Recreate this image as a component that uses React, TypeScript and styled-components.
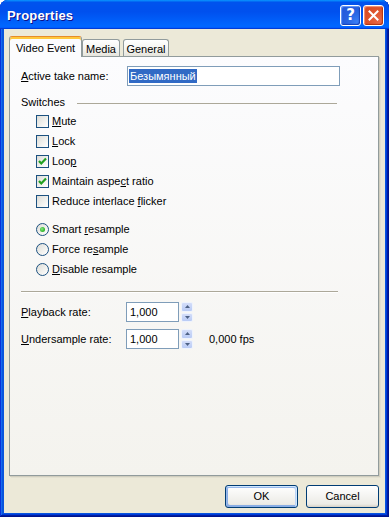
import React from "react";
import styled, { createGlobalStyle, css } from "styled-components";

const Global = createGlobalStyle`
  html, body { margin: 0; padding: 0; background: #ffffff; }
  body { font-family: "Liberation Sans", Arial, sans-serif; font-size: 11px; color: #000; }
  * { box-sizing: border-box; }
`;

const Window = styled.div`
  width: 389px;
  height: 517px;
  display: flex;
  flex-direction: column;
  background: #0855dd;
  border-radius: 8px 8px 0 0;
  overflow: hidden;
  box-shadow: inset -1px -1px #00138c, inset 1px 1px #0831d9, inset -2px -2px #001ea0,
    inset 2px 2px #166aee, inset -3px -3px #003bda, inset 3px 3px #0855dd;
`;

const TitleBar = styled.div`
  flex: none;
  height: 29px;
  display: flex;
  align-items: center;
  justify-content: space-between;
  padding: 1px 5px 0 7px;
  background: linear-gradient(180deg, #0997ff, #0053ee 8%, #0050ee 40%, #06f 88%, #06f 93%, #005bff 95%, #003dd7 96%, #003dd7);
`;

const Title = styled.div`
  font-family: "Liberation Sans", Arial, sans-serif;
  font-weight: bold;
  font-size: 13px;
  color: #fff;
  text-shadow: 1px 1px #0f1089;
  letter-spacing: 0.2px;
`;

const TitleButtons = styled.div`
  display: flex;
  gap: 2px;
`;

const CaptionButton = styled.div<{ $kind: "help" | "close" }>`
  width: 21px;
  height: 21px;
  border: 1px solid #fff;
  border-radius: 3px;
  display: flex;
  align-items: center;
  justify-content: center;
  color: #fff;
  font-family: "DejaVu Sans", sans-serif;
  font-weight: bold;
  font-size: 15px;
  ${(p) =>
    p.$kind === "help"
      ? css`
          background: radial-gradient(circle at 85% 85%, #3b7ff6 0%, #2863e0 45%, #1f55d8 100%);
          box-shadow: inset -1px -1px 1px #1741b6, inset 1px 1px 1px #6b9cf8;
        `
      : css`
          background: radial-gradient(circle at 85% 85%, #e9694a 0%, #e0562f 45%, #d1461f 100%);
          box-shadow: inset -1px -1px 1px #b03310, inset 1px 1px 1px #f39a7e;
        `}
`;

const Client = styled.div`
  flex: 1;
  margin: 0 4px 4px;
  background: #ece9d8;
  padding: 7px 6px 0 5px;
  display: flex;
  flex-direction: column;
`;

const TabStrip = styled.div`
  display: flex;
  align-items: flex-end;
  height: 21px;
  margin-bottom: -1px;
  position: relative;
  z-index: 1;
`;

const Tab = styled.div<{ $active?: boolean; $w: number; $gap?: number }>`
  width: ${(p) => p.$w}px;
  margin-left: ${(p) => p.$gap ?? 0}px;
  height: 17px;
  margin-bottom: 1px;
  border: 1px solid #919b9c;
  border-bottom: none;
  border-radius: 3px 3px 0 0;
  background: linear-gradient(180deg, #ffffff, #f3f3ef 60%, #e6e4dc);
  text-align: center;
  line-height: 13px;
  padding-top: 3px;
  ${(p) =>
    p.$active &&
    css`
      height: 21px;
      margin-bottom: 0;
      border-top: 1px solid #e68b2c;
      box-shadow: inset 0 2px #ffc83c;
      background: #fcfcfe;
      padding-top: 5px;
    `}
`;

const TabPanel = styled.div`
  height: 420px;
  flex: none;
  border: 1px solid #919b9c;
  box-shadow: 1px 1px 0 #d0cebf, 2px 2px 0 #e3e0d0;
  background: linear-gradient(180deg, #fcfcfe, #f4f3ee);
  padding: 9px 37px 0 11px;
  display: flex;
  flex-direction: column;
`;

const FieldRow = styled.div`
  display: flex;
  align-items: center;
  height: 20px;
`;

const FieldLabel = styled.div<{ $w: number }>`
  width: ${(p) => p.$w}px;
  flex: none;
  line-height: 13px;
`;

const TextInput = styled.div`
  width: 213px;
  height: 20px;
  border: 1px solid #7f9db9;
  background: #fff;
  padding: 2px 0 0 1px;
  line-height: 14px;
`;

const Selected = styled.span`
  background: #316ac5;
  color: #fff;
  padding: 0 1px;
  display: inline-block;
  line-height: 14px;
`;

const GroupHeader = styled.div`
  display: flex;
  align-items: center;
  gap: 12px;
  margin-top: 10px;
  height: 13px;
  line-height: 13px;
`;

const Rule = styled.div`
  flex: 1;
  height: 1px;
  background: #aca899;
  margin-right: 4px;
  margin-top: 1px;
`;

const OptionList = styled.div<{ $top: number }>`
  display: flex;
  flex-direction: column;
  gap: 7px;
  margin-top: ${(p) => p.$top}px;
  padding-left: 15px;
`;

const OptionRow = styled.div`
  display: flex;
  align-items: center;
  height: 13px;
  line-height: 13px;
  gap: 3px;
`;

const CheckBox = styled.span`
  width: 13px;
  height: 13px;
  flex: none;
  border: 1px solid #1c5180;
  background: linear-gradient(135deg, #dcdcd7 0%, #f2f2ef 60%, #ffffff 100%);
  display: flex;
  align-items: center;
  justify-content: center;
`;

const Radio = styled.span`
  width: 13px;
  height: 13px;
  flex: none;
  border: 1px solid #1c5180;
  border-radius: 50%;
  background: linear-gradient(135deg, #dcdcd7 0%, #f2f2ef 60%, #ffffff 100%);
  display: flex;
  align-items: center;
  justify-content: center;
`;

const RadioDot = styled.span`
  width: 5px;
  height: 5px;
  border-radius: 50%;
  background: radial-gradient(circle at 40% 40%, #8ee38a 0%, #3ec23a 50%, #1d9a1a 100%);
`;

const Separator = styled.div`
  height: 2px;
  margin: 15px 3px 0 0;
  border-top: 1px solid #aca899;
  border-bottom: 1px solid #ffffff;
`;

const SpinRow = styled.div<{ $top: number }>`
  display: flex;
  align-items: center;
  height: 20px;
  margin-top: ${(p) => p.$top}px;
`;

const NumInput = styled.div`
  width: 53px;
  height: 20px;
  border: 1px solid #7f9db9;
  background: #fff;
  padding-left: 3px;
  line-height: 18px;
`;

const Spinner = styled.div`
  display: flex;
  flex-direction: column;
  gap: 1px;
  width: 12px;
  height: 20px;
  margin-left: 2px;
`;

const SpinButton = styled.div`
  flex: 1;
  border: 1px solid #eef3fd;
  border-radius: 2px;
  background: linear-gradient(180deg, #d3ddf9, #b9cbf5);
  display: flex;
  align-items: center;
  justify-content: center;
`;

const Unit = styled.div`
  margin-left: 16px;
  line-height: 13px;
`;

const ButtonRow = styled.div`
  display: flex;
  justify-content: flex-end;
  gap: 8px;
  margin-top: 9px;
`;

const Button = styled.div<{ $default?: boolean }>`
  width: 73px;
  height: 23px;
  border: 1px solid #003c74;
  border-radius: 3px;
  background: linear-gradient(180deg, #fff, #ecebe6 86%, #d6d0c5);
  display: flex;
  align-items: center;
  justify-content: center;
  line-height: 13px;
  ${(p) =>
    p.$default &&
    css`
      box-shadow: inset -1px 1px #cee7ff, inset 1px 2px #98b8ea, inset -2px 2px #bcd4f6,
        inset 1px -1px #89ade4, inset 2px -2px #89ade4;
    `}
`;

const Check = () => (
  <svg width="9" height="9" viewBox="0 0 9 9">
    <polyline points="1,4 3.3,6.5 8,1.5" fill="none" stroke="#21a121" strokeWidth="2.2" />
  </svg>
);

const Arrow = ({ up }: { up?: boolean }) => (
  <svg width="5" height="3" viewBox="0 0 5 3">
    <polygon points={up ? "0,3 5,3 2.5,0" : "0,0 5,0 2.5,3"} fill="#4d6185" />
  </svg>
);

const checks: { label: React.ReactNode; on: boolean }[] = [
  { label: <><u>M</u>ute</>, on: false },
  { label: <><u>L</u>ock</>, on: false },
  { label: <>Loo<u>p</u></>, on: true },
  { label: <>Maintain aspe<u>c</u>t ratio</>, on: true },
  { label: <>Reduce interlace <u>f</u>licker</>, on: false },
];

const radios: { label: React.ReactNode; on: boolean }[] = [
  { label: <>Smart <u>r</u>esample</>, on: true },
  { label: <>Force re<u>s</u>ample</>, on: false },
  { label: <><u>D</u>isable resample</>, on: false },
];

const Spin = ({ value }: { value: string }) => (
  <>
    <NumInput>{value}</NumInput>
    <Spinner>
      <SpinButton><Arrow up /></SpinButton>
      <SpinButton><Arrow /></SpinButton>
    </Spinner>
  </>
);

export default function App() {
  return (
    <>
      <Global />
      <Window>
        <TitleBar>
          <Title>Properties</Title>
          <TitleButtons>
            <CaptionButton $kind="help">?</CaptionButton>
            <CaptionButton $kind="close">
              <svg width="11" height="11" viewBox="0 0 11 11">
                <path d="M1.5 1.5 L9.5 9.5 M9.5 1.5 L1.5 9.5" stroke="#fff" strokeWidth="2" strokeLinecap="square" />
              </svg>
            </CaptionButton>
          </TitleButtons>
        </TitleBar>
        <Client>
          <TabStrip>
            <Tab $active $w={73}>Video Event</Tab>
            <Tab $w={38}>Media</Tab>
            <Tab $w={46} $gap={3}>General</Tab>
          </TabStrip>
          <TabPanel>
            <FieldRow>
              <FieldLabel $w={106}><u>A</u>ctive take name:</FieldLabel>
              <TextInput><Selected>Безымянный</Selected></TextInput>
            </FieldRow>
            <GroupHeader>
              Switches
              <Rule />
            </GroupHeader>
            <OptionList $top={6}>
              {checks.map((c, i) => (
                <OptionRow key={i}>
                  <CheckBox>{c.on && <Check />}</CheckBox>
                  <span>{c.label}</span>
                </OptionRow>
              ))}
            </OptionList>
            <OptionList $top={15}>
              {radios.map((r, i) => (
                <OptionRow key={i}>
                  <Radio>{r.on && <RadioDot />}</Radio>
                  <span>{r.label}</span>
                </OptionRow>
              ))}
            </OptionList>
            <Separator />
            <SpinRow $top={9}>
              <FieldLabel $w={105}><u>P</u>layback rate:</FieldLabel>
              <Spin value="1,000" />
            </SpinRow>
            <SpinRow $top={7}>
              <FieldLabel $w={105}><u>U</u>ndersample rate:</FieldLabel>
              <Spin value="1,000" />
              <Unit>0,000 fps</Unit>
            </SpinRow>
          </TabPanel>
          <ButtonRow>
            <Button $default>OK</Button>
            <Button>Cancel</Button>
          </ButtonRow>
        </Client>
      </Window>
    </>
  );
}
